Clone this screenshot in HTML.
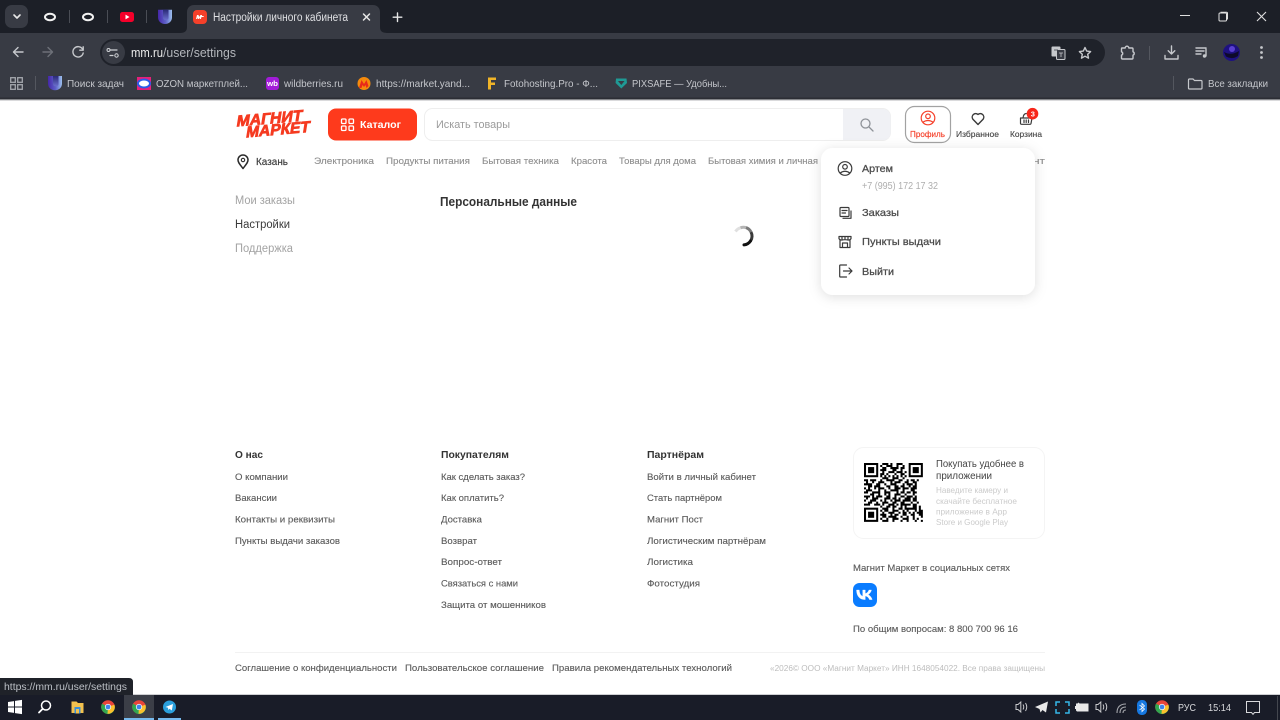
<!DOCTYPE html>
<html lang="ru">
<head>
<meta charset="utf-8">
<title>Настройки личного кабинета</title>
<style>
html,body{margin:0;padding:0;background:#fff;width:1280px;height:720px;overflow:hidden}
svg{display:block;position:absolute;left:0;top:0}
text{font-family:"Liberation Sans","Noto Sans CJK SC",sans-serif;white-space:pre}
.bm{font-size:10.5px;fill:#c4c6cb}
.nav{font-size:9.5px;fill:#8e8e8e;stroke:#8e8e8e;stroke-width:.12px}
.ft{font-size:9.5px;fill:#5a5a5a;stroke:#5a5a5a;stroke-width:.12px}
.fh{font-size:10.5px;fill:#333;font-weight:bold}
.dd{font-size:10.5px;fill:#4a4a4a;stroke:#4a4a4a;stroke-width:.25px}
.sm{font-size:8.5px;fill:#cbcbcb}
.ic{fill:none;stroke:#c6c8cc;stroke-width:1.4;stroke-linecap:round;stroke-linejoin:round}
.pi{fill:none;stroke:#3a3a3a;stroke-width:1.2;stroke-linecap:round;stroke-linejoin:round}
</style>
</head>
<body>
<svg width="1280" height="720" viewBox="0 0 1280 720" xmlns="http://www.w3.org/2000/svg">
<defs>
<g id="chrome">
<circle r="6.8" fill="#e8453a"/>
<path d="M0 0L-5.9 -3.4A6.8 6.8 0 0 0 -3.4 5.9Z" fill="#2fa84f"/>
<path d="M-3.6 6L0 0L6.6 -1.6A6.8 6.8 0 0 1 -3.6 6Z" fill="#34a853"/>
<path d="M0 0L6.4 -2.4A6.8 6.8 0 0 1 0 6.8L-0.5 6.8Z" fill="#fbc02d"/>
<circle r="3.1" fill="#fff"/><circle r="2.4" fill="#3f83ea"/>
</g>
<linearGradient id="ug" x1="0" y1="0" x2="1" y2="0"><stop offset="0" stop-color="#4526a8"/><stop offset=".55" stop-color="#5f62c8"/><stop offset="1" stop-color="#9cc0ee"/></linearGradient>
<linearGradient id="ug2" x1="0" y1="0" x2="0" y2="1"><stop offset="0" stop-color="#2a2a78"/><stop offset="1" stop-color="#6a6ecc"/></linearGradient>
<g id="ulogo">
<path d="M-7 -7H7V0.500C7 4.500 4 7.200 0 7.200C-4 7.200 -7 4.500 -7 0.500Z" fill="url(#ug)"/>
<path d="M-2 -7H3.500V1C3.500 2.500 2.500 3.200 0.800 3.200C-0.800 3.200 -2 2.500 -2 1Z" fill="url(#ug2)"/>
</g>
<filter id="sh" x="-20%" y="-20%" width="140%" height="140%"><feDropShadow dx="0" dy="2" stdDeviation="6" flood-color="#000" flood-opacity=".13"/></filter>
</defs>

<!-- browser chrome -->
<rect x="0" y="0" width="1280" height="100" fill="#1c1f27"/>
<rect x="0" y="33" width="1280" height="66" fill="#383b44"/>
<rect x="0" y="97.500" width="1280" height="1.500" fill="#2c2e35"/>
<rect x="0" y="99" width="1280" height="1.300" fill="#85868a"/>
<!-- tab strip -->
<rect x="5" y="5" width="23" height="23" rx="7" fill="#383b44"/>
<path d="M14 15l3 3 3-3" fill="none" stroke="#e8e8e8" stroke-width="1.600" stroke-linecap="round" stroke-linejoin="round"/>
<ellipse cx="50" cy="17" rx="5" ry="3.200" fill="none" stroke="#f2f2f2" stroke-width="2"/>
<rect x="69" y="10" width="1" height="13" fill="#4a4d55"/>
<ellipse cx="88" cy="17" rx="5" ry="3.200" fill="none" stroke="#f2f2f2" stroke-width="2"/>
<rect x="107" y="10" width="1" height="13" fill="#4a4d55"/>
<rect x="120" y="12" width="14" height="10" rx="2.500" fill="#f5002a"/>
<path d="M125.500 14.600v4.800l4-2.400z" fill="#fff"/>
<rect x="146" y="10" width="1" height="13" fill="#4a4d55"/>
<use href="#ulogo" x="165" y="16.800"/>
<path d="M180 33C185 33 187 31 187 27V12C187 8 190 5 194 5H373C377 5 380 8 380 12V27C380 31 382 33 387 33Z" fill="#383b44"/>
<rect x="193" y="10" width="14" height="14" rx="4" fill="#f5402a"/>
<path d="M196 19l1-4h1.500l.6 2 1.400-2h1.600l-.2 1h2l-.4 1h-2l-.6 2h-1.200l.4-1.600-1.400 1.600h-.8l-.4-1.600-.4 1.600z" fill="#fff"/>
<text x="213" y="21" font-size="11.500" fill="#dfe0e3" textLength="135" lengthAdjust="spacingAndGlyphs">Настройки личного кабинета</text>
<path d="M363.500 14l6 6m0-6l-6 6" stroke="#e6e6e6" stroke-width="1.500" stroke-linecap="round"/>
<path d="M397.500 13v8.500m-4.300-4.300h8.600" stroke="#e6e6e6" stroke-width="1.400" stroke-linecap="round"/>
<!-- window controls -->
<rect x="1180" y="15" width="10" height="1" fill="#e0e0e0"/>
<rect x="1219" y="13" width="7.500" height="8" rx="1" fill="none" stroke="#e0e0e0" stroke-width="1"/>
<path d="M1221 13v-.8h5.500q1 0 1 1v5.800h-1" fill="none" stroke="#e0e0e0" stroke-width="1"/>
<path d="M1257 12l9 9m0-9l-9 9" stroke="#e0e0e0" stroke-width="1.100"/>
<!-- toolbar -->
<path d="M23 52H14m4-4.500L13.500 52l4.500 4.500" class="ic"/>
<path d="M43 52h9m-4-4.500l4.500 4.500-4.500 4.500" class="ic" style="stroke:#6d7078"/>
<path d="M82.500 49A5.200 5.200 0 1 0 83.200 53M83.200 46.800v3.400h-3.400" class="ic"/>
<rect x="100" y="39" width="1005" height="27" rx="13.500" fill="#1f222a"/>
<circle cx="113.500" cy="52.500" r="11.500" fill="#383b44"/>
<path d="M110 50h7M110 55.500h3" stroke="#d0d2d6" stroke-width="1.200" stroke-linecap="round"/>
<circle cx="108.500" cy="50" r="1.500" fill="none" stroke="#d0d2d6"/>
<circle cx="116.500" cy="55.500" r="1.700" fill="none" stroke="#d0d2d6"/>
<text x="131" y="57" font-size="12.500" fill="#ececec" textLength="32" lengthAdjust="spacingAndGlyphs">mm.ru</text>
<text x="163" y="57" font-size="12.500" fill="#b4b7bc" textLength="73" lengthAdjust="spacingAndGlyphs">/user/settings</text>
<!-- translate, star -->
<rect x="1051.500" y="46.500" width="9" height="10" rx="1" fill="#c6c8cc"/>
<rect x="1056.500" y="49.500" width="8.500" height="10" rx="1" fill="#383b44" stroke="#c6c8cc"/>
<path d="M1054 50h4M1059 53h4M1061 53v4" stroke="#383b44" stroke-width=".8"/>
<path d="M1059 53h4M1061 53v4" stroke="#c6c8cc" stroke-width=".8"/>
<path d="M1085 47.500l1.700 3.600 3.900.5-2.900 2.700.8 3.900-3.500-2-3.500 2 .8-3.900-2.900-2.700 3.900-.5z" class="ic"/>
<!-- ext etc -->
<path d="M1122 48h3.200a1.800 1.800 0 0 1 3.600 0h3.200q1 0 1 1v2.800a1.800 1.800 0 0 1 0 3.400V58q0 1-1 1h-9.500q-1 0-1-1v-2.800a1.800 1.800 0 0 0 0-3.400V49q0-1 .5-1z" class="ic"/>
<rect x="1149" y="46" width="1" height="14" fill="#54575f"/>
<path d="M1171.500 46v8m-3.300-3.300l3.300 3.300 3.300-3.300M1165 55.500v3.500h13v-3.500" class="ic"/>
<path d="M1196 48h10M1196 51h8M1196 54h5" class="ic"/>
<path d="M1206 49v7" class="ic"/><circle cx="1204.500" cy="56" r="1.700" fill="#c6c8cc"/>
<circle cx="1231.500" cy="52.500" r="8.500" fill="#1e1180"/>
<path d="M1224 52q7 4 15-1l-1 5q-6 4-12 .5z" fill="#0e0a2a"/>
<circle cx="1232" cy="49" r="3" fill="#5a3fd0"/>
<circle cx="1261.500" cy="47.500" r="1.400" fill="#c6c8cc"/><circle cx="1261.500" cy="52.500" r="1.400" fill="#c6c8cc"/><circle cx="1261.500" cy="57.500" r="1.400" fill="#c6c8cc"/>
<!-- bookmarks -->
<g fill="none" stroke="#a4a7ad" stroke-width="1.300">
<rect x="10.700" y="77.700" width="4.600" height="4.600"/><rect x="17.700" y="77.700" width="4.600" height="4.600"/><rect x="10.700" y="84.700" width="4.600" height="4.600"/><rect x="17.700" y="84.700" width="4.600" height="4.600"/>
</g>
<rect x="35" y="76" width="1" height="14" fill="#54575f"/>
<use href="#ulogo" x="55" y="83"/>
<text x="67" y="87" class="bm" textLength="57" lengthAdjust="spacingAndGlyphs">Поиск задач</text>
<rect x="137" y="77" width="14" height="13" fill="#e6207a"/>
<ellipse cx="144" cy="83.500" rx="6" ry="4" fill="#fff" stroke="#2a5ce8" stroke-width="2"/>
<text x="156" y="87" class="bm" textLength="92" lengthAdjust="spacingAndGlyphs">OZON маркетплей...</text>
<rect x="266" y="77" width="13" height="13" rx="3" fill="#a21cd8"/>
<text x="267" y="86" font-size="7" fill="#fff" font-weight="bold" textLength="11" lengthAdjust="spacingAndGlyphs">wb</text>
<text x="284" y="87" class="bm" textLength="59" lengthAdjust="spacingAndGlyphs">wildberries.ru</text>
<circle cx="364" cy="83.500" r="6.500" fill="#f58a0c"/>
<path d="M359 88l2.500-8 2.500 4 2.500-4 2 6-2 2-1-3-1.500 2-1.500-2-1 3z" fill="#e82a1a"/>
<text x="376" y="87" class="bm" textLength="94" lengthAdjust="spacingAndGlyphs">https://market.yand...</text>
<path d="M488 77.500h8v2.500h-5v2.500h4v2.500h-4v4.500h-3z" fill="#f0b428"/>
<text x="504" y="87" class="bm" textLength="94" lengthAdjust="spacingAndGlyphs">Fotohosting.Pro - Ф...</text>
<path d="M616 78.500h10.500l.5 4.500-5.700 5.500-5.700-5.500z" fill="#1f9a95"/>
<path d="M618 81h6.500l-3.200 4z" fill="#383b44"/>
<text x="632" y="87" class="bm" textLength="95" lengthAdjust="spacingAndGlyphs">PIXSAFE — Удобны...</text>
<rect x="1173" y="76" width="1" height="14" fill="#54575f"/>
<path d="M1189 79h4l1.500 1.500h6.500q1 0 1 1V88q0 1-1 1h-11.500q-1 0-1-1V80q0-1 1-1z" fill="none" stroke="#c6c8cc" stroke-width="1.200"/>
<text x="1208" y="87" class="bm" textLength="60" lengthAdjust="spacingAndGlyphs">Все закладки</text>

<!-- page header -->
<g transform="translate(236 126.500) rotate(-5) skewX(-14)">
<text x="0" y="0" font-size="15.500" font-weight="bold" fill="#f53a20" stroke="#f53a20" stroke-width=".8" textLength="66" lengthAdjust="spacingAndGlyphs">МАГНИТ</text>
</g>
<g transform="translate(245.500 137.500) rotate(-5) skewX(-14)">
<text x="0" y="0" font-size="15.500" font-weight="bold" fill="#f53a20" stroke="#f53a20" stroke-width=".8" textLength="64" lengthAdjust="spacingAndGlyphs">МАРКЕТ</text>
</g>
<rect x="328" y="108.500" width="89" height="32" rx="8" fill="#fe3a1c"/>
<g fill="none" stroke="#fff" stroke-width="1.300"><rect x="341.500" y="119" width="4.500" height="4.500" rx="1"/><rect x="349" y="119" width="4.500" height="4.500" rx="1"/><rect x="341.500" y="126" width="4.500" height="4.500" rx="1"/><rect x="349" y="126" width="4.500" height="4.500" rx="1"/></g>
<text x="360" y="128" font-size="10.500" font-weight="bold" fill="#fff" textLength="41" lengthAdjust="spacingAndGlyphs">Каталог</text>
<rect x="424.500" y="108.500" width="466" height="32" rx="8" fill="#fff" stroke="#eeeeee"/>
<path d="M843 109H883a7.500 7.500 0 0 1 7.500 7.500V133a7 7 0 0 1-7 7H843z" fill="#f0f1f5"/>
<text x="436" y="128" font-size="11" fill="#9b9b9b" textLength="74" lengthAdjust="spacingAndGlyphs">Искать товары</text>
<circle cx="865.500" cy="123.500" r="4.500" fill="none" stroke="#8e9298" stroke-width="1.300"/>
<path d="M869 127l4 4" stroke="#8e9298" stroke-width="1.300" stroke-linecap="round"/>
<rect x="905.500" y="106.500" width="45" height="36" rx="9" fill="#fff" stroke="#a2a2a2" stroke-width="1.200"/>
<circle cx="928" cy="118" r="6.800" fill="none" stroke="#f5402a" stroke-width="1.200"/>
<circle cx="928" cy="116.300" r="2.300" fill="none" stroke="#f5402a" stroke-width="1.200"/>
<path d="M922.800 122.300q5.200-3.600 10.400 0" fill="none" stroke="#f5402a" stroke-width="1.200"/>
<text x="910" y="137" font-size="8.500" fill="#f5402a" stroke="#f5402a" stroke-width=".15" textLength="35" lengthAdjust="spacingAndGlyphs">Профиль</text>
<path d="M978 124.500l-5.200-5.400a3.500 3.500 0 0 1 5.200-4.600 3.500 3.500 0 0 1 5.200 4.600z" class="pi" style="stroke-width:1.400"/>
<text x="956" y="137" font-size="8.500" fill="#444" stroke="#444" stroke-width=".12" textLength="43" lengthAdjust="spacingAndGlyphs">Избранное</text>
<path d="M1020.500 118h11.500l-1 5.500q-.2.800-1 .8h-8.500q-.8 0-1-.8zM1023 118q.5-4.500 3.300-4.500M1024 120v2.500M1026.200 120v2.500M1028.500 120v2.500" class="pi" style="stroke-width:1.200"/>
<text x="1010" y="137" font-size="8.500" fill="#444" stroke="#444" stroke-width=".12" textLength="32" lengthAdjust="spacingAndGlyphs">Корзина</text>
<circle cx="1032.500" cy="113.700" r="5.800" fill="#f7261a"/>
<text x="1030.700" y="116.500" font-size="7.500" fill="#fff" font-weight="bold">3</text>
<!-- nav -->
<path d="M243 168.500c-3-4-5-6-5-8.500a5 5 0 0 1 10 0c0 2.500-2 4.500-5 8.500z" fill="none" stroke="#2b2b2b" stroke-width="1.500" stroke-linejoin="round"/>
<circle cx="243" cy="160" r="1.700" fill="none" stroke="#2b2b2b" stroke-width="1.100"/>
<text x="256" y="165" font-size="10" fill="#3a3a3a" stroke="#3a3a3a" stroke-width=".15" textLength="32" lengthAdjust="spacingAndGlyphs">Казань</text>
<text x="314" y="164" class="nav" textLength="60" lengthAdjust="spacingAndGlyphs">Электроника</text>
<text x="386" y="164" class="nav" textLength="84" lengthAdjust="spacingAndGlyphs">Продукты питания</text>
<text x="482" y="164" class="nav" textLength="77" lengthAdjust="spacingAndGlyphs">Бытовая техника</text>
<text x="571" y="164" class="nav" textLength="36" lengthAdjust="spacingAndGlyphs">Красота</text>
<text x="619" y="164" class="nav" textLength="77" lengthAdjust="spacingAndGlyphs">Товары для дома</text>
<text x="708" y="164" class="nav" textLength="110" lengthAdjust="spacingAndGlyphs">Бытовая химия и личная</text>
<text x="1033" y="164" class="nav" textLength="12" lengthAdjust="spacingAndGlyphs">нт</text>
<!-- sidebar -->
<text x="235" y="204" font-size="11.500" fill="#a3a3a3" textLength="60" lengthAdjust="spacingAndGlyphs">Мои заказы</text>
<text x="235" y="228" font-size="11.500" fill="#3a3a3a" textLength="55" lengthAdjust="spacingAndGlyphs">Настройки</text>
<text x="235" y="252" font-size="11.500" fill="#a3a3a3" textLength="58" lengthAdjust="spacingAndGlyphs">Поддержка</text>
<text x="440" y="206" font-size="13" font-weight="bold" fill="#333" textLength="137" lengthAdjust="spacingAndGlyphs">Персональные данные</text>
<!-- spinner -->
<g fill="none" stroke-width="3">
<path d="M735.500 231.500A9 9 0 0 1 740.500 227.800" stroke="#e0e0e0"/>
<path d="M740.500 227.800A9 9 0 0 1 746 227.600" stroke="#b5b5b5"/>
<path d="M746 227.600A9 9 0 0 1 751 232" stroke="#7a7a7a"/>
<path d="M751 232A9 9 0 0 1 750.500 241" stroke="#3a3a3a"/>
<path d="M750.500 241A9 9 0 0 1 744 244.900" stroke="#111" stroke-linecap="round"/>
</g>
<!-- dropdown -->
<rect x="821" y="148" width="214" height="147" rx="12" fill="#fff" filter="url(#sh)"/>
<circle cx="845" cy="168.500" r="6.800" class="pi"/>
<circle cx="845" cy="166.800" r="2.300" class="pi"/>
<path d="M840.200 173q4.800-3.500 9.600 0" class="pi"/>
<text x="862" y="172" class="dd" font-size="11" textLength="31" lengthAdjust="spacingAndGlyphs">Артем</text>
<text x="862" y="189" font-size="10" fill="#aeaeae" textLength="76" lengthAdjust="spacingAndGlyphs">+7 (995) 172 17 32</text>
<rect x="840" y="207.500" width="9" height="9" rx="1" class="pi"/>
<path d="M842 210.500h5M842 213h3.500M851 211v7.300h-8" class="pi"/>
<text x="862" y="216" class="dd" textLength="37" lengthAdjust="spacingAndGlyphs">Заказы</text>
<path d="M840 240v7.500h10V240M839 236.500h12v2.200q-1 1.600-3 1.300-1-.3-3-.3t-3 .3q-2 .3-3-1.300zM842.500 247.500v-4.500h5v4.500M842 236.500v3M848 236.500v3M845 236.500v3" class="pi"/>
<text x="862" y="245" class="dd" textLength="79" lengthAdjust="spacingAndGlyphs">Пункты выдачи</text>
<path d="M846.500 265h-6q-.8 0-.8.8v10.400q0 .8.800.8h6M843.500 271H852M849 268l3 3-3 3" class="pi"/>
<text x="862" y="275" class="dd" textLength="32" lengthAdjust="spacingAndGlyphs">Выйти</text>

<!-- footer -->
<text x="235" y="458" class="fh" textLength="28" lengthAdjust="spacingAndGlyphs">О нас</text>
<text x="441" y="458" class="fh" textLength="68" lengthAdjust="spacingAndGlyphs">Покупателям</text>
<text x="647" y="458" class="fh" textLength="57" lengthAdjust="spacingAndGlyphs">Партнёрам</text>
<text x="235" y="480" class="ft" textLength="53" lengthAdjust="spacingAndGlyphs">О компании</text>
<text x="235" y="501" class="ft" textLength="42" lengthAdjust="spacingAndGlyphs">Вакансии</text>
<text x="235" y="522.500" class="ft" textLength="100" lengthAdjust="spacingAndGlyphs">Контакты и реквизиты</text>
<text x="235" y="544" class="ft" textLength="105" lengthAdjust="spacingAndGlyphs">Пункты выдачи заказов</text>
<text x="441" y="480" class="ft" textLength="84" lengthAdjust="spacingAndGlyphs">Как сделать заказ?</text>
<text x="441" y="501" class="ft" textLength="63" lengthAdjust="spacingAndGlyphs">Как оплатить?</text>
<text x="441" y="522.500" class="ft" textLength="41" lengthAdjust="spacingAndGlyphs">Доставка</text>
<text x="441" y="544" class="ft" textLength="36" lengthAdjust="spacingAndGlyphs">Возврат</text>
<text x="441" y="565" class="ft" textLength="61" lengthAdjust="spacingAndGlyphs">Вопрос-ответ</text>
<text x="441" y="586.500" class="ft" textLength="77" lengthAdjust="spacingAndGlyphs">Связаться с нами</text>
<text x="441" y="608" class="ft" textLength="105" lengthAdjust="spacingAndGlyphs">Защита от мошенников</text>
<text x="647" y="480" class="ft" textLength="109" lengthAdjust="spacingAndGlyphs">Войти в личный кабинет</text>
<text x="647" y="501" class="ft" textLength="75" lengthAdjust="spacingAndGlyphs">Стать партнёром</text>
<text x="647" y="522.500" class="ft" textLength="56" lengthAdjust="spacingAndGlyphs">Магнит Пост</text>
<text x="647" y="544" class="ft" textLength="119" lengthAdjust="spacingAndGlyphs">Логистическим партнёрам</text>
<text x="647" y="565" class="ft" textLength="46" lengthAdjust="spacingAndGlyphs">Логистика</text>
<text x="647" y="586.500" class="ft" textLength="53" lengthAdjust="spacingAndGlyphs">Фотостудия</text>
<!-- QR card -->
<rect x="853.500" y="447.500" width="191" height="91" rx="10" fill="#fff" stroke="#f4f4f4"/>
<g transform="translate(864 463) scale(2.03)">
<g fill="none" stroke="#000"><rect x=".5" y=".5" width="6" height="6"/><rect x="22.500" y=".5" width="6" height="6"/><rect x=".5" y="22.500" width="6" height="6"/></g>
<rect x="2" y="2" width="3" height="3"/><rect x="24" y="2" width="3" height="3"/><rect x="2" y="24" width="3" height="3"/>
<path fill="none" stroke="#000" stroke-width="1" d="M9 .5h3m1 0h1m2 0h3M8 1.500h1m2 0h3m2 0h1m2 0h1M9 2.500h2m2 0h4m1 0h2M8 3.500h3m3 0h2m2 0h1M9 4.500h1m2 0h3m1 0h3m1 0h1M8 5.500h2m1 0h1m3 0h1m2 0h2M8 6.500h1m1 0h1m1 0h1m1 0h1m1 0h1m1 0h1m1 0h1M9 7.500h3m2 0h3m2 0h1M0 8.500h2m1 0h3m2 0h1m2 0h4m2 0h2m2 0h1m1 0h2m1 0h1M1 9.500h1m2 0h1m2 0h3m3 0h1m1 0h3m2 0h2m2 0h2M0 10.500h4m2 0h2m2 0h1m2 0h3m3 0h1m1 0h3m1 0h1M2 11.500h2m1 0h3m3 0h2m2 0h2m1 0h2m2 0h1m1 0h2M0 12.500h1m1 0h1m2 0h1m1 0h3m2 0h1m2 0h3m1 0h3m1 0h3M1 13.500h3m3 0h1m2 0h1m2 0h4m2 0h1m3 0h2M0 14.500h2m2 0h4m2 0h3m3 0h1m1 0h2m1 0h2m1 0h2M3 15.500h2m2 0h1m2 0h1m1 0h1m2 0h3m2 0h1m3 0h1M0 16.500h3m1 0h1m1 0h3m2 0h2m2 0h1m2 0h2m1 0h3m1 0h1M1 17.500h1m2 0h3m3 0h3m1 0h2m1 0h1m2 0h3m1 0h2M0 18.500h1m2 0h3m2 0h1m1 0h1m2 0h1m1 0h3m1 0h4m1 0h2M2 19.500h2m2 0h1m2 0h3m2 0h2m2 0h2m3 0h1m2 0h1M0 20.500h3m2 0h3m1 0h1m2 0h3m1 0h1m1 0h5m1 0h2M8 21.500h1m2 0h2m1 0h2m2 0h1m1 0h1m3 0h2m1 0h1M9 22.500h3m2 0h1m2 0h2m1 0h6m1 0h1M8 23.500h1m1 0h2m2 0h3m2 0h1m1 0h1m3 0h1m1 0h2M9 24.500h1m2 0h3m2 0h1m1 0h2m1 0h1m1 0h1m1 0h3M8 25.500h3m2 0h1m1 0h2m2 0h2m2 0h2m2 0h2M9 26.500h2m1 0h4m2 0h1m2 0h1m2 0h1m3 0h1M8 27.500h1m2 0h1m2 0h3m2 0h3m2 0h1m1 0h1M9 28.500h3m2 0h1m3 0h1m2 0h1m3 0h1m2 0h1"/>
</g>
<text x="936" y="467" font-size="10" fill="#444" textLength="88" lengthAdjust="spacingAndGlyphs">Покупать удобнее в</text>
<text x="936" y="479" font-size="10" fill="#444" textLength="56" lengthAdjust="spacingAndGlyphs">приложении</text>
<text x="936" y="493" class="sm" textLength="72" lengthAdjust="spacingAndGlyphs">Наведите камеру и</text>
<text x="936" y="504" class="sm" textLength="81" lengthAdjust="spacingAndGlyphs">скачайте бесплатное</text>
<text x="936" y="514.500" class="sm" textLength="71" lengthAdjust="spacingAndGlyphs">приложение в App</text>
<text x="936" y="525" class="sm" textLength="72" lengthAdjust="spacingAndGlyphs">Store и Google Play</text>
<text x="853" y="571" class="ft" textLength="157" lengthAdjust="spacingAndGlyphs">Магнит Маркет в социальных сетях</text>
<rect x="853" y="583" width="24" height="24" rx="6.500" fill="#0a7cff"/>
<path d="M856.500 590h2.800c.1 4 1.900 5.800 3.400 6.200V590h2.600v3.500c1.500-.1 3-1.800 3.600-3.500h2.600c-.5 2.200-2 3.800-3.400 4.600 1.400.7 3.300 2.300 4.100 5h-2.800c-.7-1.900-2.300-3.400-4.100-3.600v3.600h-.5c-5.200 0-8.200-3.600-8.300-9.600z" fill="#fff" stroke="#fff" stroke-width=".3"/>
<text x="853" y="632" class="ft" textLength="165" lengthAdjust="spacingAndGlyphs">По общим вопросам: 8 800 700 96 16</text>
<rect x="235" y="652" width="810" height="1" fill="#f2f2f2"/>
<text x="235" y="671" class="ft" textLength="162" lengthAdjust="spacingAndGlyphs">Соглашение о конфиденциальности</text>
<text x="405" y="671" class="ft" textLength="139" lengthAdjust="spacingAndGlyphs">Пользовательское соглашение</text>
<text x="552" y="671" class="ft" textLength="180" lengthAdjust="spacingAndGlyphs">Правила рекомендательных технологий</text>
<text x="770" y="671" font-size="8" fill="#bdbdbd" textLength="275" lengthAdjust="spacingAndGlyphs">«2026© ООО «Магнит Маркет» ИНН 1648054022. Все права защищены</text>

<!-- status bubble -->
<path d="M0 678H129q4 0 4 4V695H0z" fill="#1f2229"/>
<text x="4" y="690" font-size="10.500" fill="#bcc0c6" textLength="123" lengthAdjust="spacingAndGlyphs">https://mm.ru/user/settings</text>

<!-- taskbar -->
<rect x="0" y="695" width="1280" height="25" fill="#191c28"/>
<rect x="133" y="694" width="1147" height="1" fill="#cfd0d3"/>
<rect x="124" y="695" width="30" height="25" fill="#3b3e47"/>
<rect x="124" y="718" width="30" height="2" fill="#76b9ed"/>
<rect x="158" y="718" width="23" height="2" fill="#76b9ed"/>
<g fill="#fff"><path d="M8 702l6-.9v5.400H8zM15 700.900l7-1v6.600h-7zM8 707.500h6v5.400l-6-.9zM15 707.500h7v6.600l-7-1z"/></g>
<circle cx="46" cy="705.500" r="4.500" fill="none" stroke="#fff" stroke-width="1.500"/>
<path d="M42.500 709l-3.500 3.500" stroke="#fff" stroke-width="1.800" stroke-linecap="round"/>
<path d="M71.500 701.500h5l1.500 1.500h5.500v10h-12z" fill="#f2c14e"/>
<rect x="74.500" y="707" width="6" height="6.500" fill="#3a8fd8"/><rect x="76" y="709" width="3" height="4.500" fill="#f2c14e"/>
<use href="#chrome" x="108" y="707"/>
<use href="#chrome" x="139" y="707"/>
<circle cx="169.500" cy="707" r="6.500" fill="#2a9fdc"/>
<path d="M165.500 707l7.500-3-1.200 6.500-2.300-1.700-1.200 1.200-.3-2.300z" fill="#fff"/>
<!-- tray -->
<g fill="none" stroke="#c8c9cc" stroke-width="1">
<path d="M1016 704.500h2l2.800-2.500v10l-2.800-2.500h-2zM1023 704.500q1.500 2.500 0 5M1025.500 703q2.500 4 0 8"/>
<path d="M1096 704.500h2l2.800-2.500v10l-2.800-2.500h-2zM1103 704.500q1.500 2.500 0 5M1105.500 703q2.500 4 0 8"/>
</g>
<path d="M1035 707l13-5.500-2 11-3.500-2.500-2 2.500-1-3.500z" fill="#e8e8e8"/>
<g fill="none" stroke="#35b7e8" stroke-width="1.500"><path d="M1056 706v-4h4M1065 702h4v4M1069 709v4h-4M1060 713h-4v-4"/></g>
<path d="M1076 703.500h1.500l1-1 1 1h9v8h-11.500l-1-1z" fill="#e8e8e8"/><rect x="1075" y="706" width="2" height="3" fill="#e8e8e8"/>
<g fill="none" stroke="#a4a6ab" stroke-width="1.100"><path d="M1117 713q0-9 9-9M1120 713q0-6 6-6M1123 713q0-3 3-3"/></g>
<rect x="1137" y="700" width="10" height="15" rx="4.500" fill="#1678e0"/>
<path d="M1139.500 705l5 4-2.500 2.500v-8l2.500 2.500-5 4" fill="none" stroke="#fff" stroke-width=".8"/>
<use href="#chrome" x="1162" y="707"/>
<text x="1178" y="711" font-size="10" fill="#d8d9dc" textLength="18" lengthAdjust="spacingAndGlyphs">РУС</text>
<text x="1208" y="711" font-size="10.500" fill="#d8d9dc" textLength="23" lengthAdjust="spacingAndGlyphs">15:14</text>
<path d="M1246.500 701.500h13v11h-5l-1.500 1.800-1.500-1.800h-5z" fill="none" stroke="#d8d9dc" stroke-width="1"/>
<rect x="1277" y="696" width="1" height="24" fill="#44474f"/>
</svg>
</body>
</html>
